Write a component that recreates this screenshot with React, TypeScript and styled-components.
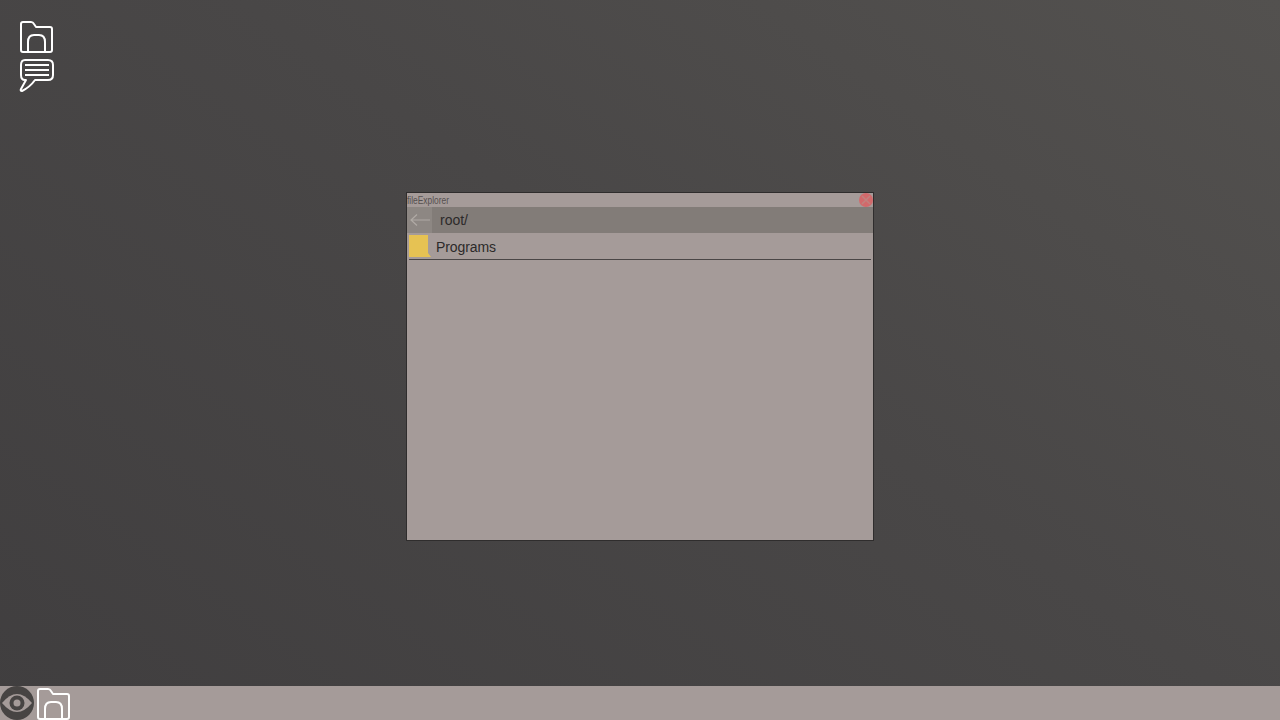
import React from 'react';
import styled, { createGlobalStyle } from 'styled-components';

const GlobalStyle = createGlobalStyle`
  html, body, #root {
    margin: 0;
    padding: 0;
    height: 100%;
  }
  body {
    overflow: hidden;
    font-family: "Liberation Sans", Arial, sans-serif;
  }
`;

const Screen = styled.div`
  position: relative;
  width: 1280px;
  height: 720px;
  display: flex;
  flex-direction: column;
  overflow: hidden;
  background: linear-gradient(215deg, #53514f 0%, #494747 45%, #403e3f 100%);
`;

const Desktop = styled.div`
  flex: 1;
  display: flex;
  flex-direction: column;
  align-items: flex-start;
  gap: 6px;
  padding: 20px 0 0 18px;
`;

const DesktopIcon = styled.div`
  width: 36px;
  height: 33px;
  display: flex;
  align-items: center;
  justify-content: center;
`;

const Window = styled.div`
  position: absolute;
  left: 406px;
  top: 192px;
  width: 468px;
  height: 349px;
  box-sizing: border-box;
  display: flex;
  flex-direction: column;
  background: #a59b99;
  border: 1px solid #2f2d2d;
`;

const TitleBar = styled.div`
  height: 14px;
  display: flex;
  align-items: center;
  justify-content: space-between;
  font-size: 10px;
  line-height: 14px;
  color: #555050;
`;

const TitleText = styled.span`
  display: inline-block;
  transform: scaleX(0.84);
  transform-origin: left center;
  padding-top: 1px;
`;

const CloseButton = styled.div`
  width: 14px;
  height: 14px;
  border-radius: 50%;
  background: #d2696b;
  display: flex;
  align-items: center;
  justify-content: center;
`;

const PathBar = styled.div`
  height: 26px;
  display: flex;
  align-items: center;
  background: #827c78;
`;

const BackButton = styled.div`
  width: 25px;
  height: 26px;
  display: flex;
  align-items: center;
  justify-content: center;
  background: #8d8783;
`;

const PathText = styled.span`
  margin-left: 8px;
  font-size: 14px;
  color: #2c2a2a;
`;

const FileRow = styled.div`
  height: 26px;
  margin: 0 2px;
  display: flex;
  align-items: center;
  gap: 5px;
  border-bottom: 1px solid #4a4646;
`;

const FolderThumb = styled.div`
  width: 22px;
  height: 22px;
  background: #e6c253;
  clip-path: polygon(0 0, 19px 0, 19px 18px, 22px 22px, 0 22px);
`;

const FileName = styled.span`
  padding-top: 2px;
  font-size: 14px;
  letter-spacing: -0.1px;
  color: #2c2a2a;
`;

const Taskbar = styled.div`
  height: 34px;
  display: flex;
  align-items: center;
  gap: 2px;
  background: #a59b99;
`;

const EyeButton = styled.div`
  width: 34px;
  height: 34px;
  border-radius: 50%;
  background: #474443;
  display: flex;
  align-items: center;
  justify-content: center;
`;

const FolderIcon = () => (
  <svg width="35" height="33" viewBox="0 0 35 33" fill="none" stroke="#fff" strokeWidth="2" strokeLinejoin="round">
    <path d="M2 4 Q2 2 4 2 H12 Q14 2 15 4 L17 7 H31 Q33 7 33 9 V30 Q33 32 31 32 H4 Q2 32 2 30 Z" />
    <path d="M9 32 V22 Q9 15 15 15 H20 Q26 15 26 22 V32" />
  </svg>
);

const ChatIcon = () => (
  <svg width="35" height="33" viewBox="0 0 35 33" fill="none" stroke="#fff" strokeWidth="2" strokeLinejoin="round">
    <path d="M6 1 H29 Q34 1 34 6 V16 Q34 21 29 21 H16 Q11 28 3 32 Q1 32 2 30 L7 21 H6 Q2 21 2 16 V6 Q2 1 6 1 Z" />
    <path d="M6 6 H30 M6 11 H30 M6 16 H30" />
  </svg>
);

const EyeIcon = () => (
  <svg width="30" height="22" viewBox="0 0 30 22" fill="none">
    <path d="M0 11 Q15 -7 30 11 Q15 29 0 11 Z" fill="#a59b99" />
    <circle cx="15" cy="11" r="7.500" fill="#474443" />
    <circle cx="15" cy="11" r="3.500" fill="#a59b99" />
  </svg>
);

const App: React.FC = () => {
  return (
    <Screen>
      <GlobalStyle />
      <Desktop>
        <DesktopIcon>
          <FolderIcon />
        </DesktopIcon>
        <DesktopIcon>
          <ChatIcon />
        </DesktopIcon>
      </Desktop>

      <Window>
        <TitleBar>
          <TitleText>fileExplorer</TitleText>
          <CloseButton>
            <svg width="10" height="10" viewBox="0 0 10 10" stroke="#c0827f" strokeWidth="1.500">
              <path d="M1 1 L9 9 M9 1 L1 9" />
            </svg>
          </CloseButton>
        </TitleBar>
        <PathBar>
          <BackButton>
            <svg width="20" height="12" viewBox="0 0 20 12" fill="none" stroke="#b0aaa5" strokeWidth="1.200">
              <path d="M20 6 H1 M7 0.500 L1 6 L7 11.500" />
            </svg>
          </BackButton>
          <PathText>root/</PathText>
        </PathBar>
        <FileRow>
          <FolderThumb />
          <FileName>Programs</FileName>
        </FileRow>
      </Window>

      <Taskbar>
        <EyeButton>
          <EyeIcon />
        </EyeButton>
        <FolderIcon />
      </Taskbar>
    </Screen>
  );
};

export default App;
